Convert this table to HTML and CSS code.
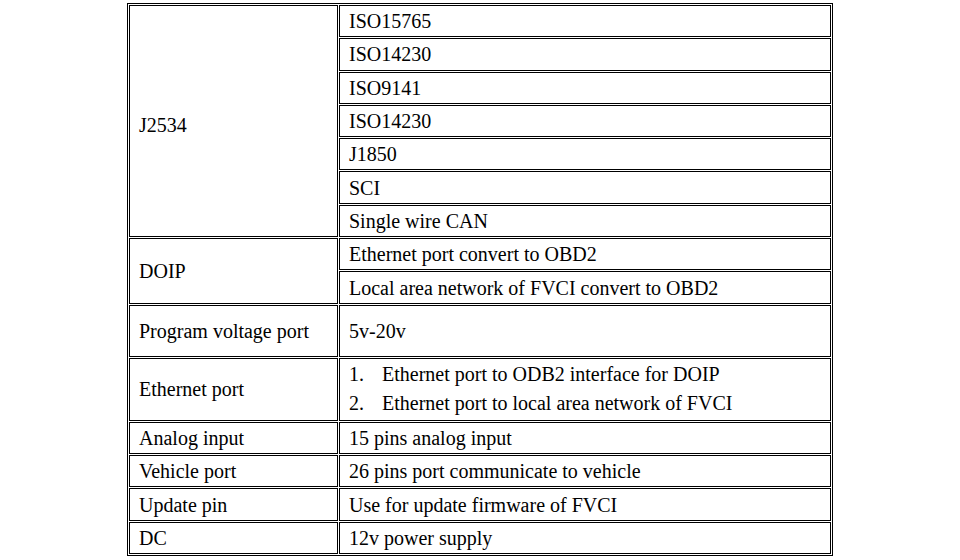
FILE: index.html
```html
<!DOCTYPE html>
<html>
<head>
<meta charset="utf-8">
<link rel="stylesheet" href="styles.css">
</head>
<body>
<div class="wrap">
<table class="spec">
<colgroup><col class="c1"><col class="c2"></colgroup>
<tbody>
<tr class="r"><td rowspan="7" class="j2534">J2534</td><td>ISO15765</td></tr>
<tr class="r"><td>ISO14230</td></tr>
<tr class="r"><td>ISO9141</td></tr>
<tr class="r"><td>ISO14230</td></tr>
<tr class="r"><td>J1850</td></tr>
<tr class="r"><td>SCI</td></tr>
<tr class="r"><td>Single wire CAN</td></tr>
<tr class="r"><td rowspan="2">DOIP</td><td>Ethernet port convert to OBD2</td></tr>
<tr class="r"><td>Local area network of FVCI convert to OBD2</td></tr>
<tr class="rp"><td>Program voltage port</td><td>5v-20v</td></tr>
<tr class="re"><td>Ethernet port</td><td>
  <ol class="list">
    <li><span class="num">1.</span><span>Ethernet port to ODB2 interface for DOIP</span></li>
    <li><span class="num">2.</span><span>Ethernet port to local area network of FVCI</span></li>
  </ol>
</td></tr>
<tr class="r"><td>Analog input</td><td>15 pins analog input</td></tr>
<tr class="r"><td>Vehicle port</td><td>26 pins port communicate to vehicle</td></tr>
<tr class="r"><td>Update pin</td><td>Use for update firmware of FVCI</td></tr>
<tr class="r"><td>DC</td><td>12v power supply</td></tr>
</tbody>
</table>
</div>
</body>
</html>
```
FILE: styles.css
```css
html, body {
  margin: 0;
  background: #fff;
}
.wrap {
  padding-top: 3px;
  display: flex;
  justify-content: center;
}
.spec {
  width: 706px;
  table-layout: fixed;
  border: 1px solid #000;
  border-spacing: 1px;
  border-collapse: separate;
  font-family: "Liberation Serif", "Times New Roman", serif;
  font-size: 20px;
  color: #000;
}
.c1 { width: 209px; }
.c2 { width: 492px; }
.spec td {
  border: 1px solid #000;
  padding: 0 9px;
  vertical-align: middle;
  white-space: nowrap;
  line-height: 22px;
}
.r { height: 32.3px; }
.rp { height: 52.5px; }
.re { height: 62.6px; }
.j2534 { padding-top: 8px !important; }
.list {
  list-style: none;
  margin: 0;
  padding: 0;
}
.list li {
  display: flex;
  line-height: 29px;
}
.num {
  width: 33px;
  flex: none;
}
```
